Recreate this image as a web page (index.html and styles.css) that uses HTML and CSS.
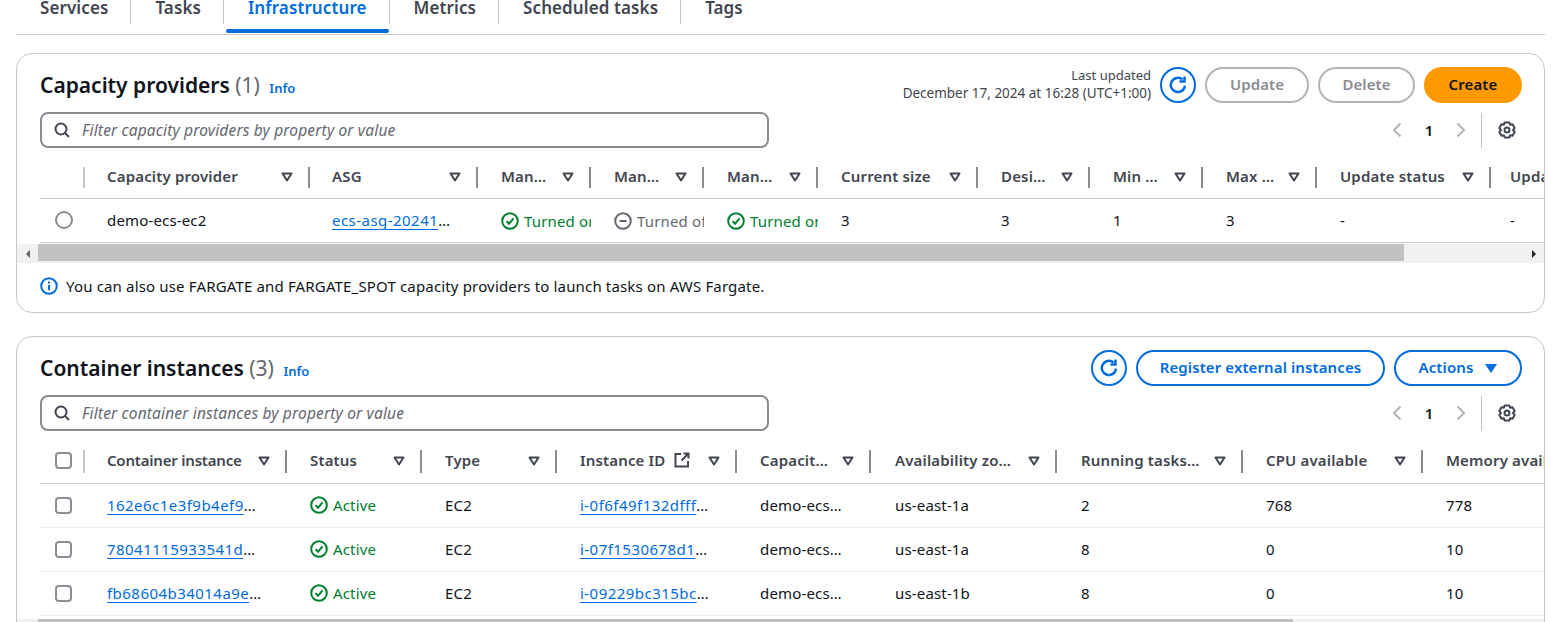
FILE: index.html
```html
<!DOCTYPE html>
<html lang="en">
<head>
  <meta charset="UTF-8" />
  <title>Infrastructure</title>
  <link rel="stylesheet" href="styles.css">
</head>
<body>
  <svg class="sprite" aria-hidden="true">
    <symbol id="i-caret" viewBox="0 0 12 12"><path d="M1.5 2.5h9L6 9.5z" fill="#fff" stroke="currentColor" stroke-width="2" stroke-linejoin="round"/></symbol>
    <symbol id="i-search" viewBox="0 0 16 16"><circle cx="7" cy="7" r="5.5" fill="none" stroke="currentColor" stroke-width="2"/><path d="M11 11l4 4" stroke="currentColor" stroke-width="2" fill="none"/></symbol>
    <symbol id="i-refresh" viewBox="0 0 16 16"><path d="M13.6 8.5A5.7 5.7 0 1 1 11.6 3.6" fill="none" stroke="currentColor" stroke-width="2"/><path d="M13.2 1.2v4h-4" fill="none" stroke="currentColor" stroke-width="2"/></symbol>
    <symbol id="i-ok" viewBox="0 0 18 18"><circle cx="9" cy="9" r="7.8" fill="none" stroke="currentColor" stroke-width="2"/><path d="M5.6 9.2l2.5 2.6 4.4-5.4" fill="none" stroke="currentColor" stroke-width="2"/></symbol>
    <symbol id="i-off" viewBox="0 0 18 18"><circle cx="9" cy="9" r="7.8" fill="none" stroke="currentColor" stroke-width="2"/><path d="M5.5 9h7" fill="none" stroke="currentColor" stroke-width="2"/></symbol>
    <symbol id="i-info" viewBox="0 0 18 18"><circle cx="9" cy="9" r="7.8" fill="none" stroke="currentColor" stroke-width="2"/><path d="M9 8v5.2M9 4.4v2" fill="none" stroke="currentColor" stroke-width="2"/></symbol>
    <symbol id="i-ext" viewBox="0 0 16 16"><path d="M7 2H1.5v12.5H14V9M9.5 1.5H14.500V6.500M14 2L7.500 8.500" fill="none" stroke="currentColor" stroke-width="2"/></symbol>
    <symbol id="i-prev" viewBox="0 0 10 16"><path d="M8.500 1.500L2 8l6.500 6.500" fill="none" stroke="currentColor" stroke-width="2"/></symbol>
    <symbol id="i-next" viewBox="0 0 10 16"><path d="M1.500 1.500L8 8l-6.500 6.500" fill="none" stroke="currentColor" stroke-width="2"/></symbol>
    <symbol id="i-gear" viewBox="0 0 18 18"><path d="M6.600 1.500h4.800l.7 2.300 2.400-.5 2.200 3.800-1.700 1.900 1.700 1.900-2.200 3.800-2.400-.5-.7 2.300H6.600l-.7-2.300-2.400.5-2.200-3.800L3 9 1.300 7.100l2.200-3.800 2.400.5z" fill="none" stroke="currentColor" stroke-width="2" stroke-linejoin="round"/><circle cx="9" cy="9" r="2.500" fill="none" stroke="currentColor" stroke-width="2"/></symbol>
  </svg>

  <div class="tabs">
    <a class="tab">Services</a>
    <a class="tab">Tasks</a>
    <a class="tab tab-active">Infrastructure</a>
    <a class="tab">Metrics</a>
    <a class="tab">Scheduled tasks</a>
    <a class="tab tab-last">Tags</a>
  </div>

  <section class="card card-providers">
    <div class="card-head">
      <h2 class="card-title">Capacity providers <span class="count">(1)</span> <a class="info">Info</a></h2>
      <div class="actions">
        <div class="updated"><span class="updated-label">Last updated</span><br>December 17, 2024 at 16:28 (UTC+1:00)</div>
        <button class="btn btn-icon"><svg class="icon-16"><use href="#i-refresh"/></svg></button>
        <button class="btn btn-off btn-update">Update</button>
        <button class="btn btn-off btn-delete">Delete</button>
        <button class="btn btn-primary btn-create">Create</button>
      </div>
    </div>
    <div class="tools">
      <div class="filter"><svg class="icon-16"><use href="#i-search"/></svg><span>Filter capacity providers by property or value</span></div>
      <div class="pager">
        <svg class="chev"><use href="#i-prev"/></svg><b>1</b><svg class="chev"><use href="#i-next"/></svg>
        <span class="pager-sep"></span>
        <svg class="gear"><use href="#i-gear"/></svg>
      </div>
    </div>
    <div class="table-wrap">
      <table class="grid grid-providers">
        <colgroup><col><col><col><col><col><col><col><col><col><col><col><col></colgroup>
        <thead>
          <tr>
            <th><div class="th th-select"><span class="sep sep-light"></span></div></th>
            <th><div class="th"><span class="th-label">Capacity provider</span><svg class="caret"><use href="#i-caret"/></svg><span class="sep"></span></div></th>
            <th><div class="th"><span class="th-label">ASG</span><svg class="caret"><use href="#i-caret"/></svg><span class="sep"></span></div></th>
            <th><div class="th"><span class="th-label">Managed scaling</span><svg class="caret"><use href="#i-caret"/></svg><span class="sep"></span></div></th>
            <th><div class="th"><span class="th-label">Managed draining</span><svg class="caret"><use href="#i-caret"/></svg><span class="sep"></span></div></th>
            <th><div class="th"><span class="th-label">Managed termination</span><svg class="caret"><use href="#i-caret"/></svg><span class="sep"></span></div></th>
            <th><div class="th"><span class="th-label">Current size</span><svg class="caret"><use href="#i-caret"/></svg><span class="sep"></span></div></th>
            <th><div class="th"><span class="th-label">Desired size</span><svg class="caret"><use href="#i-caret"/></svg><span class="sep"></span></div></th>
            <th><div class="th"><span class="th-label">Min size</span><svg class="caret"><use href="#i-caret"/></svg><span class="sep"></span></div></th>
            <th><div class="th"><span class="th-label">Max size</span><svg class="caret"><use href="#i-caret"/></svg><span class="sep"></span></div></th>
            <th><div class="th"><span class="th-label">Update status</span><svg class="caret"><use href="#i-caret"/></svg><span class="sep"></span></div></th>
            <th><div class="th"><span class="th-label">Update status reason</span></div></th>
          </tr>
        </thead>
        <tbody>
          <tr>
            <td class="cell-select"><span class="radio"></span></td>
            <td>demo-ecs-ec2</td>
            <td><a class="link">ecs-asg-20241217152611000000001</a></td>
            <td class="cell-clip"><span class="status status-ok"><svg class="icon-status"><use href="#i-ok"/></svg>Turned on</span></td>
            <td class="cell-clip"><span class="status status-off"><svg class="icon-status"><use href="#i-off"/></svg>Turned off</span></td>
            <td class="cell-clip"><span class="status status-ok"><svg class="icon-status"><use href="#i-ok"/></svg>Turned on</span></td>
            <td>3</td><td>3</td><td>1</td><td>3</td><td>-</td><td>-</td>
          </tr>
        </tbody>
      </table>
    </div>
    <div class="scrollbar">
      <span class="scroll-arrow scroll-left"></span>
      <span class="scroll-thumb thumb-providers"></span>
      <span class="scroll-fill"></span>
      <span class="scroll-arrow scroll-right"></span>
    </div>
    <p class="note"><svg class="icon-info"><use href="#i-info"/></svg>You can also use FARGATE and FARGATE_SPOT capacity providers to launch tasks on AWS Fargate.</p>
  </section>

  <section class="card card-instances">
    <div class="card-head">
      <h2 class="card-title">Container instances <span class="count">(3)</span> <a class="info">Info</a></h2>
      <div class="actions">
        <button class="btn btn-icon"><svg class="icon-16"><use href="#i-refresh"/></svg></button>
        <button class="btn btn-register">Register external instances</button>
        <button class="btn btn-actions">Actions <span class="tri"></span></button>
      </div>
    </div>
    <div class="tools">
      <div class="filter"><svg class="icon-16"><use href="#i-search"/></svg><span>Filter container instances by property or value</span></div>
      <div class="pager">
        <svg class="chev"><use href="#i-prev"/></svg><b>1</b><svg class="chev"><use href="#i-next"/></svg>
        <span class="pager-sep"></span>
        <svg class="gear"><use href="#i-gear"/></svg>
      </div>
    </div>
    <div class="table-wrap">
      <table class="grid grid-instances">
        <colgroup><col><col><col><col><col><col><col><col><col><col></colgroup>
        <thead>
          <tr>
            <th><div class="th th-select"><span class="check"></span><span class="sep sep-light"></span></div></th>
            <th><div class="th"><span class="th-label th-tight">Container instance</span><svg class="caret"><use href="#i-caret"/></svg><span class="sep"></span></div></th>
            <th><div class="th"><span class="th-label">Status</span><svg class="caret"><use href="#i-caret"/></svg><span class="sep"></span></div></th>
            <th><div class="th"><span class="th-label">Type</span><svg class="caret"><use href="#i-caret"/></svg><span class="sep"></span></div></th>
            <th><div class="th"><span class="th-label th-ext">Instance ID<svg class="icon-ext"><use href="#i-ext"/></svg></span><svg class="caret"><use href="#i-caret"/></svg><span class="sep"></span></div></th>
            <th><div class="th"><span class="th-label">Capacity provider</span><svg class="caret"><use href="#i-caret"/></svg><span class="sep"></span></div></th>
            <th><div class="th"><span class="th-label">Availability zone</span><svg class="caret"><use href="#i-caret"/></svg><span class="sep"></span></div></th>
            <th><div class="th"><span class="th-label">Running tasks count</span><svg class="caret"><use href="#i-caret"/></svg><span class="sep"></span></div></th>
            <th><div class="th"><span class="th-label">CPU available</span><svg class="caret"><use href="#i-caret"/></svg><span class="sep"></span></div></th>
            <th><div class="th"><span class="th-label">Memory available</span></div></th>
          </tr>
        </thead>
        <tbody>
          <tr>
            <td class="cell-select"><span class="check"></span></td>
            <td><a class="link">162e6c1e3f9b4ef98a1c07d2e54b6f13</a></td>
            <td><span class="status status-ok"><svg class="icon-status"><use href="#i-ok"/></svg>Active</span></td>
            <td>EC2</td>
            <td><a class="link">i-0f6f49f132dfff0a91</a></td>
            <td>demo-ecs-ec2</td>
            <td>us-east-1a</td><td>2</td><td>768</td><td>778</td>
          </tr>
          <tr>
            <td class="cell-select"><span class="check"></span></td>
            <td><a class="link">78041115933541d2b7c60e1fa94d3c28</a></td>
            <td><span class="status status-ok"><svg class="icon-status"><use href="#i-ok"/></svg>Active</span></td>
            <td>EC2</td>
            <td><a class="link">i-07f1530678d1b2c4e5</a></td>
            <td>demo-ecs-ec2</td>
            <td>us-east-1a</td><td>8</td><td>0</td><td>10</td>
          </tr>
          <tr>
            <td class="cell-select"><span class="check"></span></td>
            <td><a class="link">fb68604b34014a9e83d57c2a10f6b4e9</a></td>
            <td><span class="status status-ok"><svg class="icon-status"><use href="#i-ok"/></svg>Active</span></td>
            <td>EC2</td>
            <td><a class="link">i-09229bc315bc7d8e16</a></td>
            <td>demo-ecs-ec2</td>
            <td>us-east-1b</td><td>8</td><td>0</td><td>10</td>
          </tr>
        </tbody>
      </table>
    </div>
    <div class="scrollbar scrollbar-low">
      <span class="scroll-arrow scroll-left"></span>
      <span class="scroll-thumb thumb-instances"></span>
      <span class="scroll-fill"></span>
      <span class="scroll-arrow scroll-right"></span>
    </div>
  </section>
</body>
</html>
```

FILE: styles.css
```css
* {
  box-sizing: border-box;
}

html, body {
  height: 100%;
  overflow: hidden;
}

body {
  margin: 0;
  padding: 0 15px 0 16px;
  background: white;
  color: #0f141a;
  font-family: "Noto Sans", Arial, sans-serif;
  font-size: 15px;
  letter-spacing: 0.16px;
  line-height: 20px;
}

.sprite {
  display: none;
}

/* tabs */
.tabs {
  display: flex;
  height: 40px;
  margin-top: -5px;
  border-bottom: 1px solid #c6c6cd;
  align-items: flex-start;
}

.tab {
  position: relative;
  height: 29px;
  padding: 0 22px 0 24px;
  border-right: 1px solid #c6c6cd;
  font-size: 17px;
  font-weight: 600;
  letter-spacing: 0.1px;
  line-height: 26px;
  color: #424650;
}

.tab-last {
  border-right: none;
}

.tab-active {
  color: #006ce0;
}

.tab-active::after {
  content: "";
  position: absolute;
  left: 2px;
  right: 0;
  top: 34px;
  height: 4px;
  border-radius: 2px;
  background: #006ce0;
}

/* cards */
.card {
  margin-top: 18px;
  border: 1px solid #c6c6cd;
  border-radius: 16px;
  overflow: hidden;
}

.card-instances {
  margin-top: 23px;
  height: 400px;
}

.card-head {
  display: flex;
  justify-content: space-between;
  align-items: flex-start;
  height: 45px;
  padding: 13px 22px 0 23px;
}

.card-title {
  margin: 2px 0 0;
  font-size: 21px;
  line-height: 32px;
  font-weight: 600;
  letter-spacing: 0;
}

.count {
  font-weight: 400;
  color: #656871;
}

.info {
  margin-left: 4px;
  font-size: 13px;
  font-weight: 600;
  color: #006ce0;
}

.actions {
  display: flex;
  align-items: center;
  gap: 9px;
}

.updated {
  margin-top: -2px;
  text-align: right;
  font-size: 13.5px;
  letter-spacing: 0;
  line-height: 18px;
  color: #424650;
}

.updated-label {
  font-size: 13px;
}

.btn {
  display: flex;
  align-items: center;
  justify-content: center;
  height: 36px;
  border: 2px solid #006ce0;
  border-radius: 18px;
  background: white;
  color: #006ce0;
  font-family: inherit;
  font-size: 15px;
  font-weight: 600;
  letter-spacing: 0.1px;
  padding: 0 0 2px;
}

.btn-icon {
  width: 36px;
  padding: 0;
}

.btn-off {
  border-color: #b4b4bb;
  color: #8c8c94;
}

.btn-primary {
  border-color: #ff9900;
  background: #ff9900;
  color: #0f141a;
}

.btn-update { width: 104px; }
.btn-delete { width: 97px; }
.btn-create { width: 98px; }
.btn-register { width: 249px; }
.btn-actions { width: 128px; gap: 12px; }

.tri {
  width: 0;
  height: 0;
  margin-top: 2px;
  border-left: 6px solid transparent;
  border-right: 6px solid transparent;
  border-top: 9px solid #006ce0;
}

.icon-16 {
  width: 20px;
  height: 20px;
}

/* filter row */
.tools {
  display: flex;
  justify-content: space-between;
  padding: 13px 0 0 23px;
  height: 49px;
}

.filter {
  display: flex;
  align-items: center;
  width: 729px;
  height: 36px;
  padding-left: 12px;
  border: 2px solid #8c8c94;
  border-radius: 8px;
  font-size: 15.5px;
  font-style: italic;
  color: #656871;
}

.filter .icon-16 {
  width: 16px;
  height: 16px;
  margin-right: 12px;
  color: #424650;
}

.pager {
  display: flex;
  align-items: center;
  height: 36px;
  color: #b4b4bb;
}

.pager b {
  width: 32px;
  margin: 0 11px;
  text-align: center;
  color: #0f141a;
  font-weight: 600;
}

.chev {
  width: 10px;
  height: 16px;
}

.pager-sep {
  width: 1px;
  height: 35px;
  margin: 0 16px 0 15px;
  background: #c6c6cd;
}

.gear {
  width: 18px;
  height: 18px;
  margin-right: 28px;
  color: #424650;
}

/* tables */
.table-wrap {
  margin-left: 23px;
  overflow: hidden;
}

.grid {
  border-collapse: collapse;
  table-layout: fixed;
}

.grid-providers { width: 1700px; }
.grid-instances { width: 1563px; }

.grid-providers col:nth-child(1) { width: 45px; }
.grid-providers col:nth-child(2) { width: 225px; }
.grid-providers col:nth-child(3) { width: 168px; }
.grid-providers col:nth-child(4),
.grid-providers col:nth-child(5) { width: 113px; }
.grid-providers col:nth-child(6) { width: 114px; }
.grid-providers col:nth-child(7) { width: 160px; }
.grid-providers col:nth-child(8) { width: 112px; }
.grid-providers col:nth-child(9) { width: 113px; }
.grid-providers col:nth-child(10) { width: 114px; }
.grid-providers col:nth-child(11) { width: 174px; }
.grid-providers col:nth-child(12) { width: 249px; }

.grid-instances col:nth-child(1) { width: 45px; }
.grid-instances col:nth-child(2) { width: 202px; }
.grid-instances col:nth-child(3),
.grid-instances col:nth-child(4) { width: 135px; }
.grid-instances col:nth-child(5) { width: 180px; }
.grid-instances col:nth-child(6) { width: 134px; }
.grid-instances col:nth-child(7),
.grid-instances col:nth-child(8) { width: 186px; }
.grid-instances col:nth-child(9),
.grid-instances col:nth-child(10) { width: 180px; }

th {
  padding: 0;
  border-bottom: 1px solid #c6c6cd;
  font-weight: 600;
  text-align: left;
  color: #424650;
}

.th {
  display: flex;
  align-items: center;
  height: 50px;
  padding: 8px 0 0 22px;
}

.grid-instances .th {
  height: 52px;
}

.th-select {
  justify-content: flex-end;
  padding-left: 15px;
}

.th-label {
  flex: 1;
  min-width: 0;
  margin-top: -2px;
  overflow: hidden;
  text-overflow: ellipsis;
  white-space: nowrap;
}

.th-tight {
  margin-right: -4px;
  letter-spacing: -0.2px;
}

.th-ext {
  display: flex;
  align-items: center;
}

.icon-ext {
  flex: none;
  width: 16px;
  height: 16px;
  margin-left: 9px;
}

.caret {
  flex: none;
  width: 12px;
  height: 12px;
  margin: 0 15px 0 10px;
}

.grid-instances .caret {
  margin-left: 14px;
}

.sep {
  flex: none;
  width: 2px;
  height: 21px;
  background: #8c8c94;
}

.grid-instances .sep {
  height: 23px;
}

.sep-light {
  background: #c6c6cd;
}

.th-select .check {
  margin-right: auto;
  margin-top: -2px;
}

td {
  height: 44px;
  padding: 0 25px 2px 22px;
  border-bottom: 1px solid #ebebf0;
  overflow: hidden;
  white-space: nowrap;
  text-overflow: ellipsis;
}

.grid-providers td {
  padding-bottom: 1px;
  border-bottom-color: #c6c6cd;
}

/* columns further right sit a pixel off the header grid */
.grid-providers th:nth-child(n+4) .th,
.grid-providers td:nth-child(n+4),
.grid-instances th:nth-child(n+3) .th,
.grid-instances td:nth-child(n+3) {
  padding-left: 23px;
}

.grid-providers th:nth-child(12) .th,
.grid-providers td:nth-child(12) {
  padding-left: 19px;
}

.grid-instances th:nth-child(7) .th,
.grid-instances td:nth-child(7),
.grid-instances th:nth-child(8) .th,
.grid-instances td:nth-child(8) {
  padding-left: 24px;
}

td.cell-select {
  padding: 0 0 3px 15px;
}

td.cell-clip {
  padding-right: 0;
  text-overflow: clip;
}

.link {
  color: #006ce0;
  letter-spacing: 0.46px;
  text-decoration: underline;
  text-underline-offset: 3px;
}

.status {
  display: inline-flex;
  align-items: center;
  vertical-align: middle;
}

.status-ok { color: #00802f; }
.status-off { color: #656871; }

.icon-status {
  flex: none;
  width: 18px;
  height: 18px;
  margin-right: 5px;
}

.radio,
.check {
  display: inline-block;
  vertical-align: middle;
  border: 2px solid #8c8c94;
}

.radio {
  width: 18px;
  height: 18px;
  border-radius: 50%;
}

.check {
  width: 17px;
  height: 17px;
  border-radius: 4px;
}

/* scrollbar drawn by the browser in the original */
.scrollbar {
  display: flex;
  height: 19px;
  margin-top: 1px;
  background: #f1f1f1;
}

.scrollbar-low {
  margin-top: 3px;
}

.scroll-arrow {
  flex: none;
  width: 21px;
  display: flex;
  align-items: center;
  justify-content: center;
}

.scroll-arrow::before {
  content: "";
  border-top: 4px solid transparent;
  border-bottom: 4px solid transparent;
}

.scroll-left::before { border-right: 4px solid #606060; }
.scroll-right::before { border-left: 4px solid #202020; }

.scroll-thumb {
  flex: none;
  height: 17px;
  background: #c1c1c1;
}

.thumb-providers { width: 1366px; }
.thumb-instances { width: 1255px; }

.scroll-fill {
  flex: 1;
}

.note {
  display: flex;
  align-items: center;
  margin: 13px 0 16px 23px;
  color: #0f141a;
}

.icon-info {
  width: 18px;
  height: 18px;
  margin-right: 8px;
  color: #006ce0;
}
```
